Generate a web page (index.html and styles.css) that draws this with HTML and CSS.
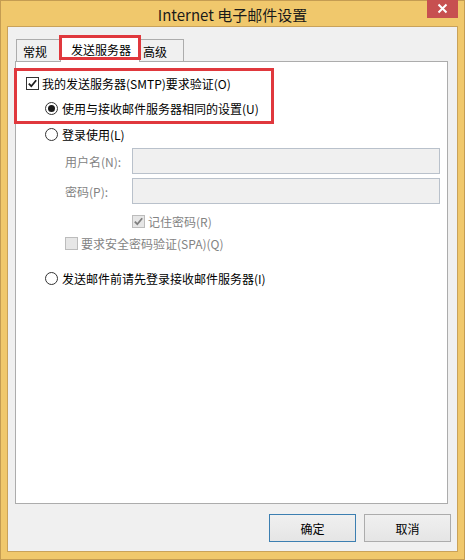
FILE: index.html
```html
<!DOCTYPE html>
<html lang="zh-CN">
<head>
<meta charset="utf-8">
<title>Internet 电子邮件设置</title>
<link rel="stylesheet" href="styles.css">
</head>
<body>
<div class="frame">
  <div class="titlebar">
    <span class="title">Internet 电子邮件设置</span>
    <div class="close">
      <svg width="31" height="18" viewBox="0 0 31 18"><path d="M11.5 4.5 L19.5 12.5 M19.5 4.5 L11.5 12.5" stroke="#fff" stroke-width="2" fill="none"/></svg>
    </div>
  </div>
  <div class="client">
    <div class="tabs">
      <div class="tab first">常规</div>
      <div class="tab selected">发送服务器<span class="mark mark-tab"></span></div>
      <div class="tab last">高级</div>
    </div>
    <div class="panel">
      <span class="mark mark-group"></span>
      <div class="row r1">
        <span class="check on"><svg width="11" height="11" viewBox="0 0 11 11"><path d="M1.8 5.6 L4.3 8.2 L9.2 2.2" stroke="#1e1e1e" stroke-width="1.8" fill="none"/></svg></span>
        <span class="lbl">我的发送服务器(SMTP)要求验证(O)</span>
      </div>
      <div class="row r2 indent1">
        <span class="radio sel"><span class="dot"></span></span>
        <span class="lbl">使用与接收邮件服务器相同的设置(U)</span>
      </div>
      <div class="row r3 indent1">
        <span class="radio"></span>
        <span class="lbl">登录使用(L)</span>
      </div>
      <div class="row field r4">
        <span class="flabel">用户名(N):</span>
        <span class="input"></span>
      </div>
      <div class="row field r5">
        <span class="flabel">密码(P):</span>
        <span class="input"></span>
      </div>
      <div class="row r6">
        <span class="check dis"><svg width="11" height="11" viewBox="0 0 11 11"><path d="M1.8 5.6 L4.3 8.2 L9.2 2.2" stroke="#7f7f7f" stroke-width="1.8" fill="none"/></svg></span>
        <span class="lbl gray">记住密码(R)</span>
      </div>
      <div class="row r7">
        <span class="check dis"></span>
        <span class="lbl gray">要求安全密码验证(SPA)(Q)</span>
      </div>
      <div class="row r8 indent1">
        <span class="radio"></span>
        <span class="lbl">发送邮件前请先登录接收邮件服务器(I)</span>
      </div>
    </div>
    <div class="buttons">
      <button class="btn default">确定</button>
      <button class="btn">取消</button>
    </div>
  </div>
</div>
</body>
</html>
```
FILE: styles.css
```css
* { box-sizing: border-box; }
html, body { margin: 0; padding: 0; }
body {
  width: 465px;
  height: 560px;
  overflow: hidden;
  font-family: "Noto Sans CJK SC", "Noto Sans", sans-serif;
  font-size: 12px;
  color: #000;
}
.frame {
  position: relative;
  width: 465px;
  height: 560px;
  background: #f0c86c;
  border: 1px solid #c49c52;
  padding: 0 6px 7px 6px;
  display: flex;
  flex-direction: column;
}
.titlebar {
  height: 25px;
  display: flex;
  align-items: center;
  justify-content: center;
}
.title {
  font-size: 15px;
  color: #1a1a1a;
  line-height: 25px;
  padding-top: 1px;
}
.close {
  position: absolute;
  left: 426px;
  top: -1px;
  width: 31px;
  height: 18px;
  background: #c75050;
}
.close svg { display: block; }
.client {
  flex: 1;
  background: #f0f0f0;
  border: 1px solid #c9a25a;
  display: flex;
  flex-direction: column;
}
.tabs {
  display: flex;
  align-items: flex-end;
  height: 25px;
  margin: 10px 0 0 7px;
  position: relative;
  z-index: 1;
}
.tab {
  position: relative;
  height: 23px;
  border: 1px solid #acacac;
  background: #f0f0f0;
  display: flex;
  align-items: center;
  justify-content: flex-start;
  padding-top: 1px;
}
.tab.first { margin-left: 1px; width: 45px; padding-left: 6px; }
.tab.selected {
  margin-left: -1px;
  width: 80px;
  height: 25px;
  background: #fff;
  border-bottom: none;
  z-index: 2;
  justify-content: center;
  padding-top: 0;
  padding-bottom: 2px;
  padding-left: 2px;
}
.tab.last { margin-left: -1px; width: 45px; padding-left: 3px; }
.mark {
  position: absolute;
  border: 3px solid #e0383d;
  pointer-events: none;
}
.mark-tab {
  left: -2px;
  top: -3px;
  width: 82px;
  height: 25px;
}
.panel {
  position: relative;
  margin: -1px 0 0 7px;
  width: 433px;
  height: 443px;
  background: #fff;
  border: 1px solid #acacac;
  padding-top: 11px;
}
.mark-group {
  left: -2px;
  top: 6px;
  width: 260px;
  height: 56px;
}
.row {
  display: flex;
  align-items: center;
  height: 20px;
  padding-left: 10px;
}
.indent1 { padding-left: 29px; }
.r2 { margin-top: 5px; }
.r3 { margin-top: 6px; }
.r4 { margin-top: 4px; }
.r5 { margin-top: 4px; }
.r6 { margin-top: 7px; padding-left: 116px; }
.r7 { margin-top: 2px; padding-left: 49px; }
.r8 { margin-top: 15px; }
.field { height: 26px; padding-left: 49px; }
.flabel {
  width: 67px;
  color: #838383;
}
.input {
  width: 308px;
  height: 26px;
  background: #f0f0f0;
  border: 1px solid #b9c1cb;
}
.check {
  width: 13px;
  height: 13px;
  border: 1px solid #333;
  background: #fff;
  display: flex;
  align-items: center;
  justify-content: center;
  flex: none;
}
.check svg { display: block; }
.check.dis {
  border-color: #bcbcbc;
  background: #e6e6e6;
}
.radio {
  width: 13px;
  height: 13px;
  border: 1px solid #333;
  border-radius: 50%;
  background: #fff;
  display: flex;
  align-items: center;
  justify-content: center;
  flex: none;
}
.radio .dot {
  width: 7px;
  height: 7px;
  border-radius: 50%;
  background: #1a1a1a;
}
.lbl { margin-left: 3px; white-space: nowrap; }
.indent1 .lbl { margin-left: 4px; }
.gray { color: #838383; }
.buttons {
  display: flex;
  justify-content: flex-end;
  gap: 8px;
  margin-top: 10px;
  padding-right: 6px;
}
.btn {
  width: 87px;
  height: 28px;
  font-family: "Noto Sans CJK SC", "Noto Sans", sans-serif;
  font-size: 12px;
  color: #000;
  border: 1px solid #acacac;
  background: linear-gradient(#f0f0f0, #e5e5e5);
  padding: 0;
  margin: 0;
}
.btn.default { border-color: #3c7fb1; }
```
